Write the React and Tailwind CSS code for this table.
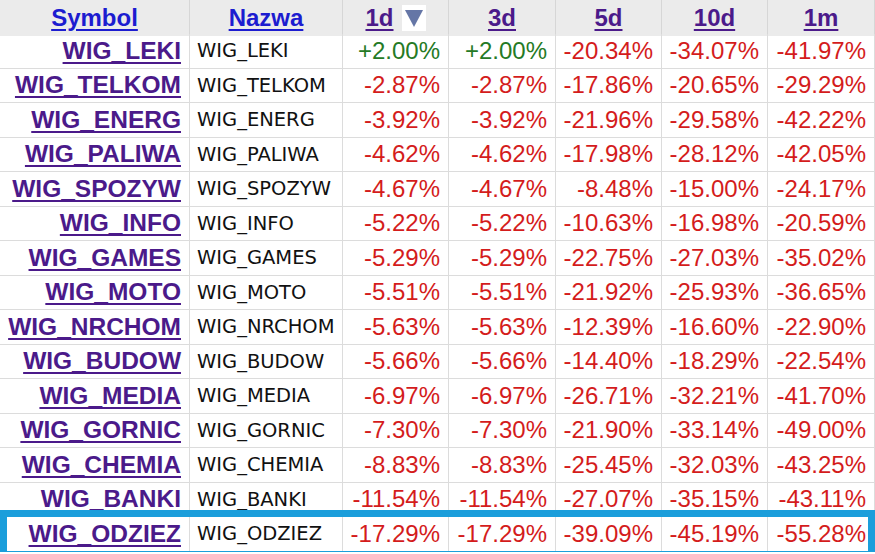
const rows = [
  ['WIG_LEKI', '+2.00%', '+2.00%', '-20.34%', '-34.07%', '-41.97%'],
  ['WIG_TELKOM', '-2.87%', '-2.87%', '-17.86%', '-20.65%', '-29.29%'],
  ['WIG_ENERG', '-3.92%', '-3.92%', '-21.96%', '-29.58%', '-42.22%'],
  ['WIG_PALIWA', '-4.62%', '-4.62%', '-17.98%', '-28.12%', '-42.05%'],
  ['WIG_SPOZYW', '-4.67%', '-4.67%', '-8.48%', '-15.00%', '-24.17%'],
  ['WIG_INFO', '-5.22%', '-5.22%', '-10.63%', '-16.98%', '-20.59%'],
  ['WIG_GAMES', '-5.29%', '-5.29%', '-22.75%', '-27.03%', '-35.02%'],
  ['WIG_MOTO', '-5.51%', '-5.51%', '-21.92%', '-25.93%', '-36.65%'],
  ['WIG_NRCHOM', '-5.63%', '-5.63%', '-12.39%', '-16.60%', '-22.90%'],
  ['WIG_BUDOW', '-5.66%', '-5.66%', '-14.40%', '-18.29%', '-22.54%'],
  ['WIG_MEDIA', '-6.97%', '-6.97%', '-26.71%', '-32.21%', '-41.70%'],
  ['WIG_GORNIC', '-7.30%', '-7.30%', '-21.90%', '-33.14%', '-49.00%'],
  ['WIG_CHEMIA', '-8.83%', '-8.83%', '-25.45%', '-32.03%', '-43.25%'],
  ['WIG_BANKI', '-11.54%', '-11.54%', '-27.07%', '-35.15%', '-43.11%'],
  ['WIG_ODZIEZ', '-17.29%', '-17.29%', '-39.09%', '-45.19%', '-55.28%'],
];

const cols = 'grid grid-cols-[190px_153px_106px_107px_106px_106px_107px]';

function HeadCell({ children, className = '' }) {
  return (
    <div className={`flex items-center justify-center border-r border-[#d6d6d6] bg-[#ebebeb] ${className}`}>
      {children}
    </div>
  );
}

function Row({ row, last }) {
  const [sym, ...vals] = row;
  return (
    <div className={`${cols} relative h-[34.5px]`}>
      <div className="flex items-center justify-end border-r border-b border-[#dcdcdc] pr-[8px]">
        <a href="#" className="text-[24.5px] font-bold leading-none text-[#4b1a8a] underline decoration-2 underline-offset-[3px]">
          {sym}
        </a>
      </div>
      <div className="flex items-center border-r border-b border-[#dcdcdc] pl-[7px] font-['DejaVu_Sans',sans-serif] text-[19.5px] text-[#111]">
        {sym}
      </div>
      {vals.map((v, i) => (
        <div
          key={i}
          className={`flex items-center justify-end border-r border-b border-[#dcdcdc] pr-[8px] text-[24px] leading-none ${
            v.startsWith('+') ? 'text-[#257a25]' : 'text-[#d41c1c]'
          }`}
        >
          {v}
        </div>
      ))}
      {last && (
        <div className="pointer-events-none absolute -top-[7px] left-0 right-0 -bottom-[6px] border-[7px] border-[#1b9edb]" />
      )}
    </div>
  );
}

export default function App() {
  return (
    <div className="w-[875px] bg-white font-['Liberation_Sans',Arial,sans-serif]">
      <div className={`${cols} h-[34px] border-b border-[#d0d0d0]`}>
        <HeadCell>
          <a href="#" className="text-[24px] font-bold text-[#1c1cd0] underline decoration-2 underline-offset-[3px]">Symbol</a>
        </HeadCell>
        <HeadCell>
          <a href="#" className="text-[24px] font-bold text-[#1c1cd0] underline decoration-2 underline-offset-[3px]">Nazwa</a>
        </HeadCell>
        <HeadCell className="gap-[8px] bg-[#c5cce0]">
          <a href="#" className="text-[24px] font-bold text-[#4b1a8a] underline decoration-2 underline-offset-[3px]">1d</a>
          <span className="flex h-[26px] w-[24px] items-center justify-center bg-white">
            <svg width="18" height="17" viewBox="0 0 18 17">
              <polygon points="0,0 18,0 9,17" fill="#6576a6" />
            </svg>
          </span>
        </HeadCell>
        {['3d', '5d', '10d', '1m'].map((h) => (
          <HeadCell key={h}>
            <a href="#" className="text-[24px] font-bold text-[#4b1a8a] underline decoration-2 underline-offset-[3px]">{h}</a>
          </HeadCell>
        ))}
      </div>
      {rows.map((r, i) => (
        <Row key={r[0]} row={r} last={i === rows.length - 1} />
      ))}
    </div>
  );
}
